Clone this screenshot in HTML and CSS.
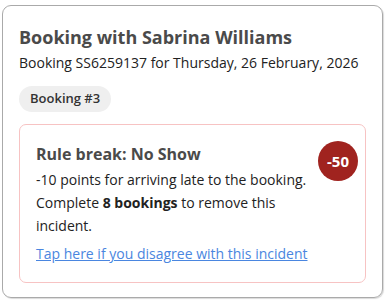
FILE: index.html
```html
<!DOCTYPE html>
<html>
<head>
<meta charset="utf-8">
<link rel="stylesheet" href="styles.css">
</head>
<body>
<div class="card">
  <h1 class="title">Booking with Sabrina Williams</h1>
  <p class="subtitle">Booking SS6259137 for Thursday, 26 February, 2026</p>
  <span class="pill">Booking #3</span>
  <div class="incident">
    <div class="incident-text">
      <h2 class="rule">Rule break: No Show</h2>
      <p class="desc first">-10 points for arriving late to the booking.</p>
      <p class="desc">Complete <strong>8 bookings</strong> to remove this incident.</p>
      <a class="dispute" href="#">Tap here if you disagree with this incident</a>
    </div>
    <div class="badge">-50</div>
  </div>
</div>
</body>
</html>
```
FILE: styles.css
```css
html, body {
  margin: 0;
  background: #fff;
}
body {
  padding: 5px 4px 5px 2px;
  font-family: "Open Sans", sans-serif;
}
.card {
  box-sizing: border-box;
  width: 381px;
  height: 293px;
  border: 1px solid #aaa;
  border-radius: 9px;
  box-shadow: 1px 1px 1px rgba(0,0,0,0.15);
  padding: 18px 16px 16px 16px;
}
.title {
  margin: 0;
  font-size: 18px;
  font-weight: 700;
  color: #4a4a4a;
  line-height: 26px;
}
.subtitle {
  margin: 3px 0 0;
  font-size: 14px;
  color: #222;
  line-height: 20px;
}
.pill {
  display: block;
  width: fit-content;
  margin-top: 13px;
  padding: 3px 11px 4px;
  background: #efefef;
  border-radius: 13px;
  font-size: 13px;
  font-weight: 600;
  color: #333;
  line-height: 19px;
}
.incident {
  margin-top: 12px;
  border: 1px solid #f7c3c3;
  border-radius: 7px;
  padding: 18px 7px 17px 16px;
  display: flex;
  justify-content: space-between;
  align-items: flex-start;
}
.rule {
  margin: 0;
  font-size: 16px;
  font-weight: 700;
  color: #4a4a4a;
  line-height: 22px;
}
.desc {
  margin: 0;
  font-size: 14px;
  color: #222;
  line-height: 23px;
}
.desc.first {
  margin-top: 3px;
}
.desc strong {
  font-weight: 700;
}
.dispute {
  display: inline-block;
  margin-top: 6px;
  font-size: 14px;
  color: #4a86e0;
  line-height: 22px;
}
.badge {
  flex: none;
  width: 40px;
  height: 40px;
  border-radius: 50%;
  background: #a0231f;
  color: #fff;
  font-weight: 700;
  font-size: 15px;
  display: flex;
  align-items: center;
  justify-content: center;
  margin-top: -2px;
}
```
